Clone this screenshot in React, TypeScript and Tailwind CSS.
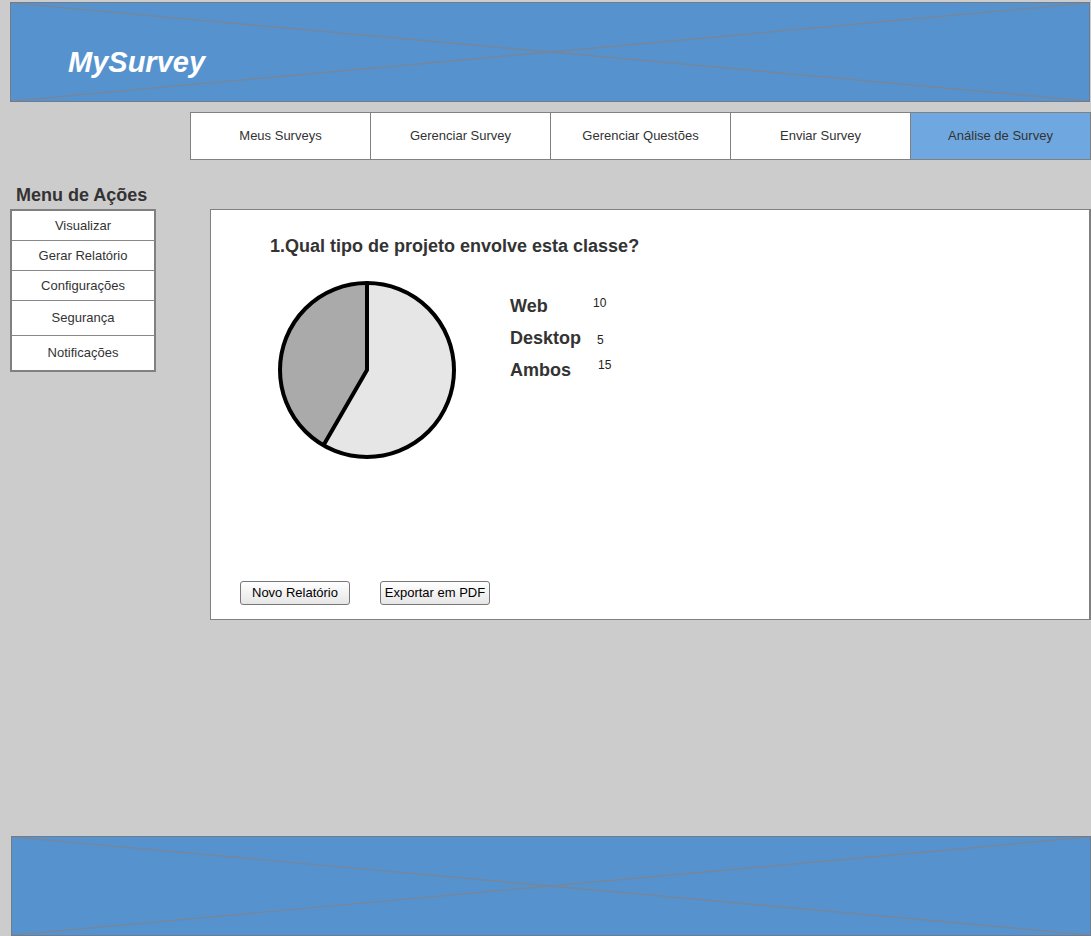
import React from "react";

const tabs = ["Meus Surveys", "Gerenciar Survey", "Gerenciar Questões", "Enviar Survey", "Análise de Survey"];
const actions = [
  { label: "Visualizar", h: "h-[30px]" },
  { label: "Gerar Relatório", h: "h-[30px]" },
  { label: "Configurações", h: "h-[30px]" },
  { label: "Segurança", h: "h-[35px]" },
  { label: "Notificações", h: "h-[34px]" },
];

function Cross() {
  return (
    <svg className="absolute inset-0" width="1078" height="98" viewBox="0 0 1078 98">
      <line x1="0" y1="0" x2="1078" y2="98" stroke="#7b8594" strokeWidth="1.2" />
      <line x1="0" y1="98" x2="1078" y2="0" stroke="#7b8594" strokeWidth="1.2" />
    </svg>
  );
}

function Pie() {
  const cx = 91;
  const cy = 91;
  const r = 87;
  const a = (210 * Math.PI) / 180;
  const ex = cx + r * Math.sin(a);
  const ey = cy - r * Math.cos(a);
  return (
    <svg width="182" height="182" viewBox="0 0 182 182">
      <circle cx={cx} cy={cy} r={r} fill="#aaaaaa" />
      <path d={`M${cx} ${cy} L${cx} ${cy - r} A${r} ${r} 0 1 1 ${ex} ${ey} Z`} fill="#e6e6e6" />
      <path d={`M${cx} ${cy - r} L${cx} ${cy} L${ex} ${ey}`} fill="none" stroke="#000" strokeWidth="4" strokeLinejoin="miter" />
      <circle cx={cx} cy={cy} r={r} fill="none" stroke="#000" strokeWidth="4" />
    </svg>
  );
}

export default function App() {
  return (
    <div className="min-h-[936px] w-[1091px] overflow-hidden bg-[#cccccc] pt-[2px] font-['Liberation_Sans',Arial,sans-serif]">
      {/* Header */}
      <div className="relative ml-[10px] flex h-[100px] w-[1080px] items-end border border-[#6f7c8c] bg-[#5692ce]">
        <Cross />
        <span className="relative mb-[23px] ml-[57px] text-[29px] leading-[32px] font-bold italic text-white">MySurvey</span>
      </div>

      {/* Nav */}
      <div className="ml-[190px] mt-[10px] flex h-[48px] w-[901px] border-y border-r border-[#808080] bg-white">
        {tabs.map((t, i) => (
          <div
            key={t}
            className={`flex w-[180px] items-center justify-center border-l border-[#808080] text-[13px] text-[#333] ${i === tabs.length - 1 ? "bg-[#6fa8e0]" : ""}`}
          >
            {t}
          </div>
        ))}
      </div>

      {/* Body */}
      <div className="flex">
        <div className="ml-[10px] mt-[25px] flex w-[146px] flex-col">
          <div className="ml-[6px] h-[24px] text-[18px] leading-[20px] font-bold text-[#333]">Menu de Ações</div>
          <div className="flex flex-col border-2 border-[#808080] bg-white">
            {actions.map((a, i) => (
              <div
                key={a.label}
                className={`flex items-center justify-center text-[13px] text-[#333] ${a.h} ${i < actions.length - 1 ? "border-b border-[#888]" : ""}`}
              >
                {a.label}
              </div>
            ))}
          </div>
        </div>

        <div className="ml-[54px] mt-[49px] flex h-[411px] w-[881px] flex-col border border-r-2 border-[#808080] bg-white">
          <div className="pl-[59px] pt-[26px] text-[18px] leading-[20px] font-bold text-[#333]">
            1.Qual tipo de projeto envolve esta classe?
          </div>
          <div className="mt-[23px] flex items-start">
            <div className="ml-[65px]">
              <Pie />
            </div>
            <div className="ml-[52px] mt-[17px] flex flex-col gap-[12px]">
              <div className="flex items-start">
                <span className="w-[83px] text-[18px] leading-[20px] font-bold text-[#333]">Web</span>
                <span className="text-[12px] leading-[14px] text-[#222]">10</span>
              </div>
              <div className="flex items-start">
                <span className="w-[87px] text-[18px] leading-[20px] font-bold text-[#333]">Desktop</span>
                <span className="mt-[5px] text-[12px] leading-[14px] text-[#222]">5</span>
              </div>
              <div className="flex items-start">
                <span className="w-[88px] text-[18px] leading-[20px] font-bold text-[#333]">Ambos</span>
                <span className="-mt-[2px] text-[12px] leading-[14px] text-[#222]">15</span>
              </div>
            </div>
          </div>
          <div className="mt-auto flex gap-[30px] pb-[14px] pl-[29px]">
            {["Novo Relatório", "Exportar em PDF"].map((b) => (
              <button
                key={b}
                className="flex h-[24px] w-[110px] items-center justify-center rounded-[3px] border border-[#777] bg-gradient-to-b from-white to-[#e6e6e6] text-[13px] text-black"
              >
                {b}
              </button>
            ))}
          </div>
        </div>
      </div>

      {/* Footer */}
      <div className="relative ml-[11px] mt-[216px] h-[100px] w-[1080px] border border-[#6f7c8c] bg-[#5692ce]">
        <Cross />
      </div>
    </div>
  );
}
